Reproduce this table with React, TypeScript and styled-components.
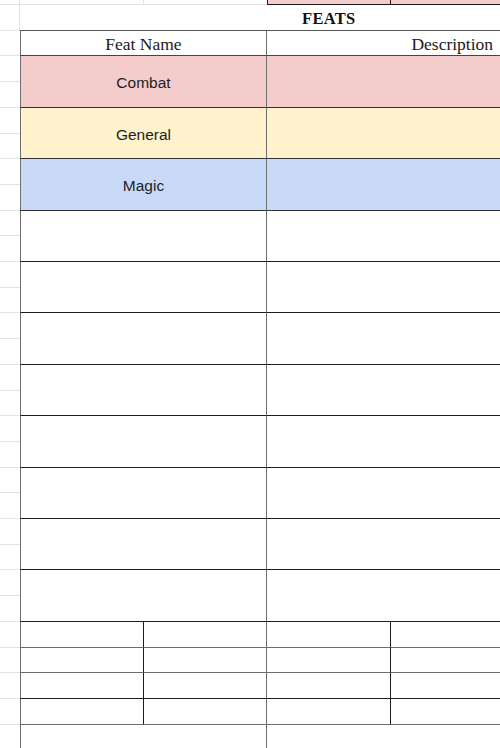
import React from "react";
import styled, { createGlobalStyle } from "styled-components";

const Global = createGlobalStyle`
  html, body { margin: 0; padding: 0; background: #fff; }
  * { box-sizing: border-box; }
`;

const LIGHT = "#e2e2e2";
const DARK = "#1c1c1c";
const MID = "#6e6e6e";

const Sheet = styled.div`
  display: grid;
  grid-template-columns: 20px repeat(5, 123.5px);
  grid-template-rows: 5px repeat(30, 25.71px);
  width: 500px;
  height: 748px;
  overflow: hidden;
  background: #fff;
`;

type CellProps = {
  $r: number;
  $rs?: number;
  $c: number;
  $cs?: number;
  $bg?: string;
  $bottom?: string;
  $right?: string;
  $left?: string;
};

const Cell = styled.div<CellProps>`
  grid-row: ${(p) => p.$r} / span ${(p) => p.$rs ?? 1};
  grid-column: ${(p) => p.$c} / span ${(p) => p.$cs ?? 1};
  background: ${(p) => p.$bg ?? "#fff"};
  border-bottom: 1px solid ${(p) => p.$bottom ?? "transparent"};
  border-right: ${(p) => (p.$right ? `1px solid ${p.$right}` : "none")};
  border-left: ${(p) => (p.$left ? `1px solid ${p.$left}` : "none")};
  display: flex;
  align-items: center;
  justify-content: center;
  overflow: visible;
  white-space: nowrap;
`;

const Gutter = styled.div<{ $r: number; $edge?: boolean }>`
  grid-row: ${(p) => p.$r};
  grid-column: 1;
  border-bottom: 1px solid ${LIGHT};
  border-right: ${(p) => (p.$edge ? `1px solid ${LIGHT}` : "none")};
`;

const Title = styled.span`
  font-family: "Liberation Serif", "Times New Roman", serif;
  font-weight: bold;
  font-size: 16.5px;
  color: #111;
  letter-spacing: 0.3px;
  margin-top: 4px;
`;

const HeadLabel = styled.span`
  font-family: "Liberation Serif", "Times New Roman", serif;
  font-size: 17.5px;
  color: #1a1a1a;
  margin-top: 3px;
`;

const GroupLabel = styled.span`
  font-family: "Liberation Sans", Arial, sans-serif;
  font-size: 15.5px;
  color: #1e1e1e;
  margin-top: 3px;
`;

const groups = [
  { name: "Combat", bg: "#f4cccc", row: 4 },
  { name: "General", bg: "#fff2cc", row: 6 },
  { name: "Magic", bg: "#c9daf8", row: 8 },
];

const blankRows = [10, 12, 14, 16, 18, 20, 22, 24];
const smallRows = [
  { row: 26, bottom: MID },
  { row: 27, bottom: MID },
  { row: 28, bottom: DARK },
  { row: 29, bottom: MID },
];

export default function App() {
  const gutters = Array.from({ length: 31 }, (_, i) => i + 1);
  return (
    <>
      <Global />
      <Sheet>
        {gutters.map((r) => (
          <Gutter key={`g${r}`} $r={r} $edge={r <= 2} />
        ))}

        {/* partial top row */}
        <Cell $r={1} $c={2} $bottom={LIGHT} $right={LIGHT} />
        <Cell $r={1} $c={3} $bottom={LIGHT} />
        <Cell $r={1} $c={4} $bg="#f4cccc" $bottom={DARK} $left={DARK} $right={DARK} />
        <Cell $r={1} $c={5} $bg="#f4cccc" $bottom={DARK} $right={DARK} />
        <Cell $r={1} $c={6} $bg="#f4cccc" $bottom={DARK} />

        {/* title */}
        <Cell $r={2} $c={2} $cs={5} $bottom="#555">
          <Title>FEATS</Title>
        </Cell>

        {/* header */}
        <Cell $r={3} $c={2} $cs={2} $left={MID} $right={MID} $bottom="#444">
          <HeadLabel>Feat Name</HeadLabel>
        </Cell>
        <Cell $r={3} $c={4} $cs={3} $bottom="#444">
          <HeadLabel>Description</HeadLabel>
        </Cell>

        {groups.map((g) => (
          <React.Fragment key={g.name}>
            <Cell $r={g.row} $rs={2} $c={2} $cs={2} $bg={g.bg} $left={MID} $right={MID} $bottom="#333">
              <GroupLabel>{g.name}</GroupLabel>
            </Cell>
            <Cell $r={g.row} $rs={2} $c={4} $cs={3} $bg={g.bg} $bottom="#333" />
          </React.Fragment>
        ))}

        {blankRows.map((r) => (
          <React.Fragment key={`b${r}`}>
            <Cell $r={r} $rs={2} $c={2} $cs={2} $left={MID} $right={MID} $bottom={DARK} />
            <Cell $r={r} $rs={2} $c={4} $cs={3} $bottom={DARK} />
          </React.Fragment>
        ))}

        {smallRows.map((s) => (
          <React.Fragment key={`s${s.row}`}>
            <Cell $r={s.row} $c={2} $left={MID} $right={DARK} $bottom={s.bottom} />
            <Cell $r={s.row} $c={3} $right={MID} $bottom={s.bottom} />
            <Cell $r={s.row} $c={4} $right={DARK} $bottom={s.bottom} />
            <Cell $r={s.row} $c={5} $right={DARK} $bottom={s.bottom} />
            <Cell $r={s.row} $c={6} $bottom={s.bottom} />
          </React.Fragment>
        ))}

        <Cell $r={30} $c={2} $cs={2} $left={MID} $right={MID} $bottom={MID} />
        <Cell $r={30} $c={4} $cs={3} $bottom={MID} />
      </Sheet>
    </>
  );
}
